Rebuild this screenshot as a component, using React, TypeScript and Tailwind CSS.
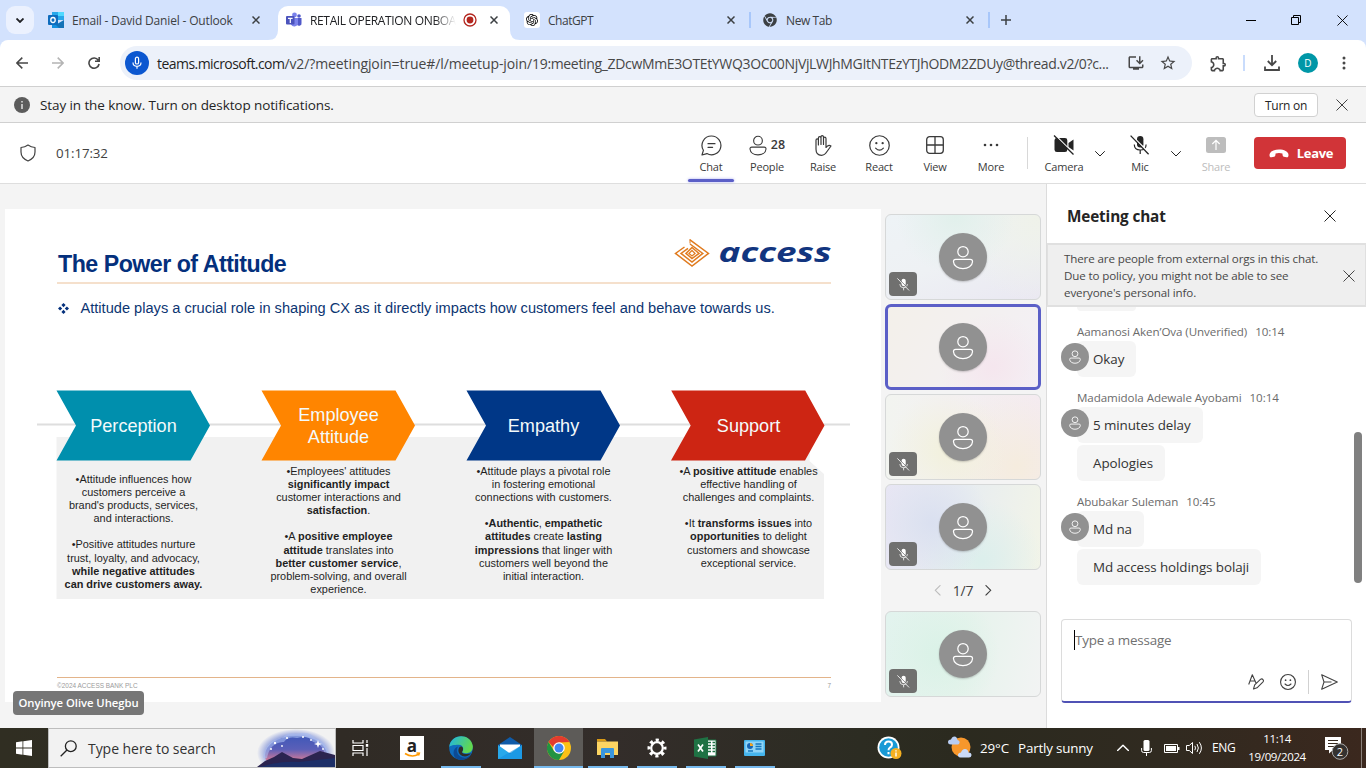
import React from "react";
import { SiOpenai } from "react-icons/si";
import { FaChrome } from "react-icons/fa";
import { MdInstallDesktop, MdStarBorder, MdOutlineExtension } from "react-icons/md";

type P = { className?: string };

const Dismiss = ({ className = "size-3" }: P) => (
  <svg viewBox="0 0 12 12" className={className} fill="none" stroke="currentColor" strokeWidth="1">
    <path d="M.5.5l11 11M11.5.5L.5 11.5" />
  </svg>
);

const TabClose = () => (
  <svg viewBox="0 0 8 8" className="size-2 shrink-0" fill="none" stroke="#3c4043" strokeWidth="1.5">
    <path d="M.5.5l7 7M7.5.5l-7 7" />
  </svg>
);

const Chevron = ({ className = "" }: P) => (
  <svg viewBox="0 0 10 6" className={className} fill="none" stroke="currentColor" strokeWidth="1">
    <path d="M.5.5L5 5 9.5.5" strokeLinecap="round" />
  </svg>
);

const Person = ({ className = "" }: P) => (
  <svg viewBox="0 0 22 26" className={className} fill="none" stroke="currentColor">
    <circle cx="11" cy="7" r="5.4" />
    <path d="M3.4 15h15.2q2.4 0 2.3 2.4C20.6 22 16.200 24.600 11 24.600S1.400 22 1.100 17.400Q1 15 3.400 15z" />
  </svg>
);

const MicOff = ({ className = "" }: P) => (
  <svg viewBox="0 0 20 20" className={className}>
    <rect x="7" y="1" width="6.400" height="11.500" rx="3.200" fill="currentColor" />
    <path d="M4.300 9.500q0 5.500 5.900 5.500t5.900-5.500M10.200 15v4" fill="none" stroke="currentColor" strokeWidth="1.200" />
    <path d="M1.600.400l18 18" stroke="var(--cut)" strokeWidth="1.400" />
    <path d="M.600.600l18 18.600" stroke="currentColor" strokeWidth="1.300" />
  </svg>
);

const Smile = ({ className = "" }: P) => (
  <svg viewBox="0 0 20 20" className={className} fill="none" stroke="currentColor" strokeWidth="1.150">
    <circle cx="10" cy="10" r="9.300" />
    <path d="M6.300 12.500Q10 16.400 13.700 12.500" strokeLinecap="round" />
    <circle cx="7" cy="7.800" r="1.100" fill="currentColor" stroke="none" />
    <circle cx="13" cy="7.800" r="1.100" fill="currentColor" stroke="none" />
  </svg>
);

function OutlookLogo() {
  return (
    <svg viewBox="0 0 16 16" className="size-4 shrink-0">
      <path d="M4 0h12v8H4z" fill="#28a8ea" />
      <path d="M10 0h6v4h-6z" fill="#50d9ff" />
      <path d="M4 4h6v4H4z" fill="#0364b8" />
      <path d="M16 8v8H4V9l6 2.500z" fill="#1490df" />
      <path d="M16 8l-8 5 3 3h5z" fill="#123b6d" opacity=".35" />
      <rect y="3" width="10" height="10" rx="1" fill="#0f6cbd" />
      <ellipse cx="5" cy="8" rx="2.200" ry="2.500" fill="none" stroke="#fff" strokeWidth="1.300" />
    </svg>
  );
}

function TeamsLogo() {
  return (
    <svg viewBox="0 0 16 16" className="size-4 shrink-0">
      <circle cx="13" cy="4" r="1.800" fill="#5059c9" />
      <circle cx="8.500" cy="3" r="2.400" fill="#7b83eb" />
      <path d="M11 6h4.500v5a2.300 2.300 0 0 1-4.500 1z" fill="#5059c9" />
      <path d="M5 6h7v5.500a3.800 3.800 0 0 1-7 1z" fill="#7b83eb" />
      <rect x="0" y="4" width="8.500" height="8.500" rx="1" fill="#4b53bc" />
      <path d="M2 6.300h4.600M4.300 6.300v4.600" stroke="#fff" strokeWidth="1.200" />
    </svg>
  );
}

function TabStrip() {
  return (
    <div className="flex h-10 bg-[#d3e2fd] text-[12px] text-[#3c4043]">
      <div className="ml-1.5 mt-1.5 flex size-7 items-center justify-center rounded-[9px] bg-[#ebf1fe]">
        <svg viewBox="0 0 8 5" className="w-2 text-[#202124]" fill="none" stroke="currentColor" strokeWidth="1.800">
          <path d="M.500.500L4 4 7.500.500" />
        </svg>
      </div>
      <div className="flex w-[244px] items-center pl-3.5">
        <OutlookLogo />
        <span className="ml-2 w-[180px] whitespace-nowrap pt-px tracking-[-0.170px]">Email - David Daniel - Outlook</span>
        <TabClose />
      </div>
      <div className="relative mt-1.5 flex w-[232px] items-center rounded-t-[10px] bg-white pb-1.5 pl-2 text-[#202124]">
        <svg className="absolute -left-2.5 bottom-0 size-2.5" viewBox="0 0 10 10"><path d="M10 0v10H0Q10 10 10 0z" fill="#fff" /></svg>
        <svg className="absolute -right-2.5 bottom-0 size-2.5" viewBox="0 0 10 10"><path d="M0 0v10h10Q0 10 0 0z" fill="#fff" /></svg>
        <TeamsLogo />
        <span className="ml-2 w-[146px] whitespace-nowrap pt-px tracking-[-0.350px] [mask-image:linear-gradient(to_right,#000_85%,transparent)]">
          RETAIL OPERATION ONBOA
        </span>
        <svg viewBox="0 0 14 14" className="ml-[7px] mr-[13px] size-3.5">
          <circle cx="7" cy="7" r="6" fill="none" stroke="#b3261e" strokeWidth="1.300" />
          <circle cx="7" cy="7" r="3.400" fill="#b3261e" />
        </svg>
        <TabClose />
      </div>
      <div className="flex w-[241px] items-center pl-3.5">
        <span className="flex size-4 items-center justify-center rounded-[3px] bg-white"><SiOpenai className="size-3 text-black" /></span>
        <span className="ml-2 w-[180px] pt-px tracking-[-0.450px]">ChatGPT</span>
        <TabClose />
        <span className="ml-3.5 h-4 w-0.5 bg-[#a8c7fa]" />
      </div>
      <div className="flex w-[239px] items-center pl-3">
        <FaChrome className="size-3.5 text-[#3c4043]" />
        <span className="ml-[9px] w-[180px] pt-px tracking-[-0.400px]">New Tab</span>
        <TabClose />
        <span className="ml-3.5 h-4 w-0.5 bg-[#a8c7fa]" />
      </div>
      <svg viewBox="0 0 10 10" className="ml-[11px] size-2.5 self-center" stroke="#3c4043" strokeWidth="1.500"><path d="M5 0v10M0 5h10" /></svg>
      <div className="ml-auto flex w-[138px] items-center justify-around text-black">
        <svg viewBox="0 0 10 10" className="w-2.5" stroke="currentColor"><path d="M0 5.500h10" /></svg>
        <svg viewBox="0 0 10 10" className="w-2.5" fill="none" stroke="currentColor"><path d="M.500 2.500h7v7h-7zM2.500 2.500v-2h7v7h-2" /></svg>
        <Dismiss className="size-[11px]" />
      </div>
    </div>
  );
}

function Toolbar() {
  return (
    <div className="bg-[#d3e2fd]">
      <div className="flex h-[46px] items-center rounded-t-lg bg-white text-[#474747]">
        <svg viewBox="0 0 12 12" className="ml-4 size-3" fill="none" stroke="currentColor" strokeWidth="1.500"><path d="M12 6H1M6.300.600L.900 6l5.400 5.400" /></svg>
        <svg viewBox="0 0 12 12" className="ml-6 size-3 text-[#b4b4b4]" fill="none" stroke="currentColor" strokeWidth="1.500"><path d="M0 6h11M5.700.600L11.100 6l-5.400 5.400" /></svg>
        <svg viewBox="0 0 12 12" className="ml-6 size-3" fill="none" stroke="currentColor" strokeWidth="1.600"><path d="M10.300 3.200A5.100 5.100 0 1 0 11.100 7M11.200 0v4.300H7" /></svg>
        <div className="ml-5 flex h-[34px] w-[1072px] items-center rounded-full bg-[#ecf1fa] pl-[5px]">
          <span className="flex size-6 items-center justify-center rounded-full bg-[#0b57d0]">
            <svg viewBox="0 0 10 14" className="h-3.5 w-2.5" fill="none" stroke="#fff" strokeWidth="1.200"><rect x="3.400" y="1.200" width="3.200" height="6.800" rx="1.600" /><path d="M1 6.500q0 3.800 4 3.800t4-3.800M5 10.300v2.400" /></svg>
          </span>
          <span className="ml-2 w-[966px] whitespace-nowrap text-[14px]">
            <span className="tracking-[-0.550px] text-[#1f1f1f]">teams.microsoft.com</span>
            <span className="tracking-[-0.100px]">/v2/?meetingjoin=true#/l/meetup-join/</span>
            <span className="tracking-[-0.340px]">19:meeting_ZDcwMmE3OTEtYWQ3OC00NjVjLWJhMGItNTEzYTJhODM2ZDUy@thread.v2/0?c...</span>
          </span>
          <MdInstallDesktop className="ml-1 size-[18px] shrink-0" />
          <MdStarBorder className="ml-3.5 size-[18px] shrink-0" />
        </div>
        <MdOutlineExtension className="ml-[17px] size-[19px]" />
        <span className="ml-[15px] h-4 w-0.5 bg-[#c9dcfc]" />
        <svg viewBox="0 0 16 16" className="ml-[19px] size-4" fill="none" stroke="currentColor" strokeWidth="1.800"><path d="M8 0v10M3.800 6L8 10.200 12.200 6M1 11.500V15h14v-3.500" /></svg>
        <span className="ml-[18px] flex size-5 items-center justify-center rounded-full bg-[#0097a7] text-[10px] text-white">D</span>
        <svg viewBox="0 0 4 14" className="ml-6 h-3.5 w-1" fill="currentColor"><circle cx="2" cy="2" r="1.500" /><circle cx="2" cy="7" r="1.500" /><circle cx="2" cy="12" r="1.500" /></svg>
      </div>
    </div>
  );
}

function Notice() {
  return (
    <div className="flex h-[37px] items-center border-y border-[#d0d0d0] bg-[#f4f4f4] pl-3.5 pt-px text-[#242424]">
      <svg viewBox="0 0 16 16" className="size-4"><circle cx="8" cy="8" r="8" fill="#5c5c5c" /><path d="M8 7v5M8 4v1.500" stroke="#f4f4f4" strokeWidth="1.300" /></svg>
      <span className="ml-2.5 text-[13.500px] tracking-[-0.100px]">Stay in the know. Turn on desktop notifications.</span>
      <span className="ml-auto flex h-6 w-16 items-center justify-center rounded border border-[#d1d1d1] bg-white pt-px text-[12px] tracking-[-0.250px]">Turn on</span>
      <Dismiss className="ml-[18px] mr-[18px] size-3 text-[#424242]" />
    </div>
  );
}

function Tool({ label, children, active, muted }: { label: string; children: React.ReactNode; active?: boolean; muted?: boolean }) {
  return (
    <div className={`flex h-full w-14 flex-col items-center pt-2.5 ${muted ? "text-[#bdbdbd]" : "text-[#3a3a3a]"}`}>
      <div className="flex h-6 items-center gap-1">{children}</div>
      <span className="mt-0.5 text-[11px] leading-4 tracking-[-0.200px]">{label}</span>
      {active && <span className="mt-1 h-[2.500px] w-[46px] rounded-full bg-[#5b5fc7] shadow-[0_0_3px_#a9abf0]" />}
    </div>
  );
}

function MeetingBar() {
  return (
    <div className="flex h-[61px] items-center border-b border-[#dedede] bg-white">
      <svg viewBox="0 0 16 18" className="ml-5 h-[18px] w-4 text-[#424242]" fill="none" stroke="currentColor" strokeWidth="1.200"><path d="M8 1q3 2.300 7 2.500V8q0 6-7 9Q1 14 1 8V3.500Q5 3.300 8 1z" strokeLinejoin="round" /></svg>
      <span className="ml-5 pt-px text-[13.300px] tracking-[-0.100px] text-[#424242]">01:17:32</span>
      <div className="ml-auto flex h-full">
        <Tool label="Chat" active>
          <svg viewBox="0 0 21 21" className="size-[21px]" fill="none" stroke="currentColor" strokeWidth="1.200"><path d="M10.500 1a9.400 9.400 0 1 1-4.600 17.600L1 20l1.400-4.700A9.400 9.400 0 0 1 10.500 1zM7 8.700h7M7 12.300h4.600" strokeLinecap="round" strokeLinejoin="round" /></svg>
        </Tool>
        <Tool label="People">
          <Person className="h-[21px] w-[18px] [stroke-width:1.400]" />
          <span className="text-[12.500px] font-semibold">28</span>
        </Tool>
        <Tool label="Raise">
          <svg viewBox="0 0 18 21" className="h-[21px] w-[18px]" fill="none" stroke="currentColor" strokeWidth="1.200" strokeLinecap="round" strokeLinejoin="round"><path d="M2 10V5.200q0-1.300 1.200-1.300t1.200 1.300V10 3q0-1.300 1.300-1.300T7 3v6.500V2Q7 .700 8.200.700T9.500 2v7.500V3.500q0-1.300 1.200-1.300T12 3.500V12.500l1.600-1.600q1.600-1.200 3.400.100L13 16.500q-2.300 3.800-5.500 3.800-5.500 0-5.500-6z" /></svg>
        </Tool>
        <Tool label="React"><Smile className="size-[21px]" /></Tool>
        <Tool label="View">
          <svg viewBox="0 0 18 18" className="size-[18px]" fill="none" stroke="currentColor" strokeWidth="1.300"><rect x=".700" y=".700" width="16.600" height="16.600" rx="3" /><path d="M9 .700v16.600M.700 9h16.600" /></svg>
        </Tool>
        <Tool label="More">
          <svg viewBox="0 0 16 4" className="h-1 w-4" fill="currentColor"><circle cx="2" cy="2" r="1.300" /><circle cx="8" cy="2" r="1.300" /><circle cx="14" cy="2" r="1.300" /></svg>
        </Tool>
      </div>
      <span className="ml-2 h-8 w-px bg-[#d8d8d8]" />
      <div className="ml-2 flex h-full items-center text-[#242424]">
        <Tool label="Camera">
          <svg viewBox="0 0 22 20" className="h-5 w-[22px]"><path d="M4 3h8q2.300 0 2.300 2.300v9.400Q14.300 17 12 17H4q-2.500 0-2.500-2.300V5.300Q1.500 3 4 3zM15.500 8l5-3.500v11l-5-3.500z" fill="#242424" /><path d="M2 0l19 19" stroke="#fff" strokeWidth="1.500" /><path d="M1 .500l19.500 19" stroke="#242424" strokeWidth="1.300" /></svg>
        </Tool>
        <div className="flex w-4 justify-center pt-0.5"><Chevron className="w-2.5" /></div>
      </div>
      <div className="ml-1 flex h-full items-center text-[#242424]">
        <Tool label="Mic"><MicOff className="size-5 text-[#242424] [--cut:#fff]" /></Tool>
        <div className="flex w-4 justify-center pt-0.5"><Chevron className="w-2.5" /></div>
      </div>
      <div className="ml-1 h-full">
        <Tool label="Share" muted>
          <svg viewBox="0 0 20 16" className="h-4 w-5"><rect width="20" height="16" rx="2.500" fill="#bdbdbd" /><path d="M10 13V3.500M6.300 7L10 3.300 13.700 7" fill="none" stroke="#fff" strokeWidth="1.200" /></svg>
        </Tool>
      </div>
      <div className="ml-2.5 mr-5 flex h-8 w-[92px] items-center justify-center gap-2 rounded bg-[#d13438] pl-0.5 text-white">
        <svg viewBox="0 0 20 9" className="w-5" fill="#fff"><path d="M10 .500c5 0 9.500 2 9.500 5.500 0 2-.800 2.500-2 2.200l-2.600-.500c-1-.200-1.200-.800-1.300-1.700l-.200-1.400C11.500 3.900 8.500 3.900 6.600 4.600L6.400 6c-.100.900-.300 1.500-1.300 1.700l-2.600.500c-1.200.300-2-.200-2-2.200C.500 2.500 5 .500 10 .500z" /></svg>
        <span className="pt-px text-[13px] font-bold tracking-[-0.300px]">Leave</span>
      </div>
    </div>
  );
}

const columns: { label: string[]; lines: React.ReactNode[]; top: string }[] = [
  {
    label: ["Perception"],
    top: "pt-[11.500px]",
    lines: ["•Attitude influences how", "customers perceive a", "brand's products, services,", "and interactions.", "", "•Positive attitudes nurture", "trust, loyalty, and advocacy,", <b>while negative attitudes</b>, <b>can drive customers away.</b>],
  },
  {
    label: ["Employee", "Attitude"],
    top: "pt-[3.500px]",
    lines: ["•Employees' attitudes", <b>significantly impact</b>, "customer interactions and", <><b>satisfaction</b>.</>, "", <>•A <b>positive employee</b></>, <><b>attitude</b> translates into</>, <><b>better customer service</b>,</>, "problem-solving, and overall", "experience."],
  },
  {
    label: ["Empathy"],
    top: "pt-[3.500px]",
    lines: ["•Attitude plays a pivotal role", "in fostering emotional", "connections with customers.", "", <>•<b>Authentic</b>, <b>empathetic</b></>, <><b>attitudes</b> create <b>lasting</b></>, <><b>impressions</b> that linger with</>, "customers well beyond the", "initial interaction."],
  },
  {
    label: ["Support"],
    top: "pt-[3.500px]",
    lines: [<>•A <b>positive attitude</b> enables</>, "effective handling of", "challenges and complaints.", "", <>•It <b>transforms issues</b> into</>, <><b>opportunities</b> to delight</>, "customers and showcase", "exceptional service."],
  },
];

function AccessLogo() {
  return (
    <div className="flex items-center">
      <svg viewBox="0 0 36 30" className="h-[30px] w-9" fill="none" stroke="#e07b1f" strokeWidth="1.500">
        <path d="M16 1.800L34.500 15.400 18 28 1.500 15.400 10.500 9" />
        <path d="M16 6L28.800 15.400 18 24 7 15.400 14 10.300" />
        <path d="M16 1v4.500" strokeWidth="1" />
        <path d="M18 9.500l7 5.900-7 5.200-6-5.200z" />
        <path d="M18 12.500l3 2.900-3 2.600-3-2.600z" strokeWidth="1.300" />
      </svg>
      <svg viewBox="0 0 114 30" className="ml-[7px] h-[30px] w-[114px] overflow-visible">
        <text x="1.500" y="24" textLength="113" lengthAdjust="spacingAndGlyphs" className="fill-[#12357f] font-['Open_Sans'] text-[27px] font-bold italic">access</text>
      </svg>
    </div>
  );
}

function Slide() {
  return (
    <div className="relative ml-[5px] mt-[25px] h-[493px] w-[876px] bg-white font-['Liberation_Sans',Arial,sans-serif]">
      <div className="ml-[52px] flex h-[75px] w-[774px] items-end justify-between border-b-2 border-[#f5e0cc]">
        <h1 className="mb-1 ml-px whitespace-nowrap text-[23.200px] font-bold leading-7 tracking-[-0.500px] text-[#04307c]">The Power of Attitude</h1>
        <div className="mb-[14px]"><AccessLogo /></div>
      </div>
      <div className="ml-[53px] mt-3 flex items-center text-[14.620px] leading-6 text-[#0c3572]">
        <svg viewBox="0 0 12 12" className="size-[11px]" fill="#04307c"><path d="M6 0l2.300 2.300L6 4.600 3.700 2.300zM6 7.400l2.300 2.300L6 12 3.700 9.700zM2.300 3.700L4.600 6 2.300 8.300 0 6zM9.700 3.700L12 6 9.700 8.300 7.400 6z" /></svg>
        <span className="ml-[11.500px] whitespace-nowrap">Attitude plays a crucial role in shaping CX as it directly impacts how customers feel and behave towards us.</span>
      </div>
      <div className="relative mt-[70px] h-[210px]">
        <svg className="absolute inset-0" width="876" height="210" viewBox="0 0 876 210">
          <path d="M32 34.500h813" stroke="#dedede" strokeWidth="2" />
          <path d="M51.500 47H806l-1.500 24 14.500 13v125H51.500z" fill="#f1f1f1" />
          <path d="M51.500.500h134L205 35.500l-19.500 35h-134L71 35.500z" fill="#008fad" />
          <path d="M256.500.500h134L410 35.500l-19.500 35h-134L276 35.500z" fill="#ff8500" />
          <path d="M461.500.500h134L615 35.500l-19.500 35h-134L481 35.500z" fill="#003787" />
          <path d="M666.200.500h134L819.500 35.500l-19.500 35h-134L685.700 35.500z" fill="#cd2513" />
        </svg>
        <div className="relative ml-[51.500px] flex gap-[51px]">
          {columns.map((c) => (
            <div key={c.label[0]} className="w-[154px]">
              <div className="flex h-[71px] flex-col items-center justify-center pt-px text-[18.100px] leading-[22px] text-[#f4fafb]">
                {c.label.map((l) => <span key={l}>{l}</span>)}
              </div>
              <div className={`flex flex-col items-center whitespace-nowrap text-[10.900px] leading-[13.200px] text-[#1f1f1f] ${c.top}`}>
                {c.lines.map((l, i) => <div key={i} className="h-[13.200px]">{l}</div>)}
              </div>
            </div>
          ))}
        </div>
      </div>
      <div className="ml-[52px] mt-[77px] flex w-[774px] justify-between border-t border-[#e3b48a] pt-1 text-[6.450px] leading-2 text-[#9a9a9a]">
        <span>©2024 ACCESS BANK PLC</span>
        <span>7</span>
      </div>
      <div className="absolute left-2 top-[482px] flex h-6 w-[131px] items-center justify-center whitespace-nowrap rounded bg-[#767676] pt-px font-['Open_Sans',sans-serif] text-[11.300px] font-semibold tracking-[-0.050px] text-white">
        Onyinye Olive Uhegbu
      </div>
    </div>
  );
}

function Tile({ bg, speaking }: { bg: string; speaking?: boolean }) {
  return (
    <div className={`relative flex h-[86px] w-[156px] items-center justify-center rounded-md ${speaking ? "border-[3px] border-[#5b5fc7]" : "border border-[#d6d8d8]"} ${bg}`}>
      <div className="flex size-12 items-center justify-center rounded-full bg-[#919191] shadow-[0_1px_2px_#0003]">
        <Person className="h-[25px] w-[22px] text-white [stroke-width:1.300]" />
      </div>
      {!speaking && (
        <div className="absolute bottom-[3px] left-[3px] flex h-6 w-7 items-center justify-center rounded bg-[#70706f]">
          <MicOff className="size-[13px] text-white [--cut:#70706f]" />
        </div>
      )}
    </div>
  );
}

function Participants() {
  return (
    <div className="ml-1 mt-[30px] flex flex-col gap-1">
      <Tile bg="bg-[radial-gradient(circle_at_45%_0%,#e1f0eb,transparent_50%),radial-gradient(circle_at_100%_0%,#eff2e9,transparent_50%),linear-gradient(160deg,#eef3f6,#eef1f4_50%,#eae8f2)]" />
      <Tile speaking bg="bg-[radial-gradient(circle_at_70%_75%,#f5e6ee,transparent_45%),linear-gradient(120deg,#f3f0ea,#f3f0f1_60%,#f4f0f6)]" />
      <Tile bg="bg-[radial-gradient(circle_at_40%_65%,#f2f1dc,transparent_55%),radial-gradient(circle_at_85%_85%,#f5ecde,transparent_55%),linear-gradient(90deg,#f2f4f0,#f4ebf3)]" />
      <Tile bg="bg-[radial-gradient(circle_at_30%_45%,#dae0f0,transparent_50%),radial-gradient(circle_at_62%_90%,#dcefec,transparent_50%),linear-gradient(100deg,#e8e6f4,#e8edf0_50%,#f2f4e8)]" />
      <div className="-my-1 flex h-[41px] items-center justify-center gap-2.5 text-[14px] text-[#424242]">
        <Chevron className="w-[11px] rotate-90 text-[#bdbdbd]" />
        <span className="tracking-[-0.200px]">1/7</span>
        <Chevron className="w-[11px] -rotate-90" />
      </div>
      <Tile bg="bg-[radial-gradient(circle_at_35%_50%,#daf2e7,transparent_55%),linear-gradient(100deg,#e2f3ee,#e6f3ec_50%,#f2f3f3)]" />
    </div>
  );
}

function Group({ name, time, messages }: { name: string; time: string; messages: string[] }) {
  return (
    <div className="ml-[30px] mt-[13px] flex flex-col items-start">
      <div className="flex h-4 items-center gap-2 whitespace-nowrap text-[11.600px] tracking-[-0.080px] text-[#6b6b6b]"><span>{name}</span><span>{time}</span></div>
      <div className="relative flex flex-col items-start gap-0.5 pt-px">
        {messages.map((m) => (
          <div key={m} className="flex h-9 items-center whitespace-nowrap rounded-md bg-[#f5f5f5] pl-4 pr-3 text-[13.400px] tracking-[-0.080px] text-[#333]">{m}</div>
        ))}
        <div className="absolute -left-4 top-[3px] flex size-7 items-center justify-center rounded-full bg-[#919191]">
          <Person className="h-3.5 w-3 text-white [stroke-width:1.600]" />
        </div>
      </div>
    </div>
  );
}

function Chat() {
  return (
    <div className="relative ml-[5px] flex w-80 flex-col border-l border-[#dcdcdc] bg-white">
      <div className="flex h-[59px] items-center justify-between pb-0 pl-5 pr-[30px] pt-1 text-[#242424]">
        <span className="pt-px text-[15.300px] font-bold tracking-[-0.130px]">Meeting chat</span>
        <Dismiss />
      </div>
      <div className="flex h-16 items-center justify-between border-2 border-x border-[#e0e0e0] bg-[#efefef] pl-4 pr-[10px] pt-px text-[#484848]">
        <p className="whitespace-nowrap text-[11.600px] leading-[17px] tracking-[-0.130px]">There are people from external orgs in this chat.<br />Due to policy, you might not be able to see<br />everyone's personal info.</p>
        <Dismiss />
      </div>
      <div className="ml-[30px] h-1 w-[59px] rounded-b-md bg-[#f5f5f5]" />
      <Group name="Aamanosi Aken’Ova (Unverified)" time="10:14" messages={["Okay"]} />
      <Group name="Madamidola Adewale Ayobami" time="10:14" messages={["5 minutes delay", "Apologies"]} />
      <Group name="Abubakar Suleman" time="10:45" messages={["Md na", "Md access holdings bolaji"]} />
      <div className="ml-3.5 mt-[34px] flex h-[84px] w-[291px] flex-col justify-between rounded border border-b-2 border-[#dcdcdc] border-b-[#5052b5] px-3 pt-2.5">
        <span className="h-5 border-l border-black text-[13.400px] leading-5 tracking-[-0.200px] text-[#707070]">Type a message</span>
        <div className="flex h-[39px] items-center justify-end pr-px text-[#424242]">
          <svg viewBox="0 0 16 16" className="mr-4 size-4" fill="none" stroke="currentColor" strokeWidth="1.100" strokeLinejoin="round"><path d="M.700 10.500L4.300.800 8 9M2 7h4.600M5.500 15l1.200-4.200 5.700-5.400q1.600-1.100 2.600.200 1 1.200-.200 2.500L9 13.800z" /></svg>
          <Smile className="size-4 [stroke-width:1.400]" />
          <span className="mx-3 h-6 w-px bg-[#d1d1d1]" />
          <svg viewBox="0 0 17 16" className="h-4 w-[17px]" fill="none" stroke="currentColor" strokeWidth="1.100" strokeLinejoin="round"><path d="M.700.800L16.300 8 .700 15.200 3 8zM3 8h7.500" /></svg>
        </div>
      </div>
      <div className="absolute right-1 top-[248px] h-[151px] w-2 rounded-full bg-[#808080]" />
    </div>
  );
}

function TaskIcon({ children, open, on }: { children: React.ReactNode; open?: boolean; on?: boolean }) {
  return (
    <div className={`flex h-10 w-[49px] shrink-0 flex-col items-center ${on ? "bg-[#5d5b58]" : ""}`}>
      <div className="flex h-[38px] items-center pt-[2px]">{children}</div>
      {open && <span className={`h-0.5 bg-[#76b9ed] ${on ? "w-full" : "w-10"}`} />}
    </div>
  );
}

function Taskbar() {
  return (
    <div className="flex h-10 items-center bg-[linear-gradient(90deg,#302e22,#302b25_25%,#332d2a_45%,#2c2c22_63%,#2b2a1f_70%,#302a20_85%,#3b281e)] text-white">
      <div className="flex w-12 justify-center">
        <svg viewBox="0 0 16 16" className="size-4" fill="#fff"><path d="M0 2.200l6.500-.900v6.300H0zM7.300 1.200L16 0v7.600H7.300zM0 8.400h6.500v6.300L0 13.800zM7.300 8.400H16V16l-8.700-1.200z" /></svg>
      </div>
      <div className="flex h-10 w-72 items-center border border-[#bdbdbd] bg-[#f2f2f2] text-[#333]">
        <svg viewBox="0 0 17 17" className="ml-[11px] size-[17px]" fill="none" stroke="#222" strokeWidth="1.300"><circle cx="10.800" cy="6.200" r="5.400" /><path d="M7 10L.700 16.300" /></svg>
        <span className="ml-[11px] text-[14px] tracking-[-0.050px]">Type here to search</span>
        <svg viewBox="0 0 78 38" className="ml-auto h-[38px] w-[78px]">
          <defs>
            <linearGradient id="sky" x1="0" y1="0" x2="0" y2="1"><stop offset="0" stopColor="#4058b8" /><stop offset=".350" stopColor="#5a5fb8" /><stop offset=".620" stopColor="#c9789a" /><stop offset=".780" stopColor="#ff9463" /><stop offset="1" stopColor="#7a3b63" /></linearGradient>
            <radialGradient id="halo"><stop offset=".650" stopColor="#7387d6" /><stop offset="1" stopColor="#f2f2f2" /></radialGradient>
          </defs>
          <ellipse cx="39" cy="24" rx="39" ry="24" fill="url(#halo)" />
          <ellipse cx="39" cy="26" rx="31" ry="19" fill="url(#sky)" />
          <path d="M8 29Q11 12 26 11q5-6 14-4 12-3 17 4 11 3 13 15" fill="none" stroke="#a9bdf0" strokeWidth="4" opacity=".6" />
          <path d="M0 38l8-6 9-4 8-5 11 6 9 1 18-8 15 4v12z" fill="#2b2450" />
          <path d="M2 38q20-6 40-5l36-4v9z" fill="#1d2f68" />
          <g fill="#fff"><circle cx="14" cy="20" r="1" /><circle cx="18" cy="14" r="1.200" /><circle cx="30" cy="9" r="1.100" /><circle cx="46" cy="8" r="1" /><circle cx="66" cy="20" r=".900" /><circle cx="25" cy="17" r=".900" /><circle cx="54" cy="11" r=".900" /><path d="M61 11l1 3 3 1-3 1-1 3-1-3-3-1 3-1z" /></g>
        </svg>
      </div>
      <div className="flex w-12 justify-center">
        <svg viewBox="0 0 17 16" className="h-4 w-[17px]" fill="none" stroke="#fff" strokeWidth="1.200"><path d="M1 0v3h10V0M1 16v-3h10v3M1 5.500h10v5H1zM15 0v3M15 8v8" /><path d="M13.800 4h2.400v2.800h-2.400z" fill="#fff" stroke="none" /></svg>
      </div>
      <div className="flex w-[395px] shrink-0 pl-[3px]">
        <TaskIcon>
          <svg viewBox="0 0 24 24" className="size-6 overflow-visible"><rect width="24" height="24" fill="#fff" /><text x="12" y="16" textAnchor="middle" className="fill-[#222] font-['Open_Sans'] text-[17px] font-bold">a</text><path d="M5 17.500q7 4.500 13.500.800M16.500 17l2.800.300-.800 2.300" fill="none" stroke="#f90" strokeWidth="1.600" /></svg>
        </TaskIcon>
        <TaskIcon open>
          <svg viewBox="0 0 24 24" className="size-6"><defs><linearGradient id="edg" x1="0" y1="0" x2="1" y2=".400"><stop offset="0" stopColor="#1fb5e6" /><stop offset="1" stopColor="#62d94e" /></linearGradient></defs><circle cx="12" cy="12" r="11.800" fill="#0f6cbd" /><path d="M.300 11C1.500-3 22-3 23.800 10c.400 5-3 7.300-7 7.300-2.500 0-4-1-3.700-1.600 2-2 1.500-7-3.500-7C5 8.700 1 9.500.300 11z" fill="url(#edg)" /><path d="M9 10.500C6.500 14 8 20 14 21.500c3 .500 6-.500 8.300-3C19 24 12 25 8 23 3 20.500 3.500 12 9 10.500z" fill="#0c4a94" /><path d="M13.100 15.700c-1 2 5 3.300 9 1.600-2.500 3.600-8 4.200-11 1.200-3-3-1.500-8.500 1.500-8 2 1 1.800 4 .500 5.200z" fill="#302c28" /></svg>
        </TaskIcon>
        <TaskIcon>
          <svg viewBox="0 0 24 22" className="h-[22px] w-6"><path d="M0 8L12 0l12 8v3H0z" fill="#0f5ba8" /><path d="M2 7.500h20V16H2z" fill="#fff" /><path d="M0 8l12 8.500L24 8v14H0z" fill="#28a8ea" /><path d="M0 22L24 8v14z" fill="#1490df" opacity=".600" /></svg>
        </TaskIcon>
        <TaskIcon open on>
          <svg viewBox="0 0 24 24" className="size-6"><circle cx="12" cy="12" r="12" fill="#fbc116" /><path d="M1.600 6A12 12 0 0 1 22.400 6L12 6.500 8 13z" fill="#e33b2e" /><path d="M1.600 6A12 12 0 0 0 12 24l5.200-9L12 17.500 7 15z" fill="#229342" /><circle cx="12" cy="12" r="5.800" fill="#fff" /><circle cx="12" cy="12" r="4.500" fill="#4285f4" /></svg>
        </TaskIcon>
        <TaskIcon open>
          <svg viewBox="0 0 22 19" className="h-[19px] w-[22px]"><path d="M0 0h8l2 2.500H0z" fill="#d99a16" /><path d="M0 2.500h21V16H0z" fill="#fcd462" /><path d="M4 10q0-1 1-1h11q1 0 1 1v9h-4v-5H8v5H4z" fill="#3a96dd" /></svg>
        </TaskIcon>
        <TaskIcon open>
          <svg viewBox="0 0 20 20" className="size-5" fill="none" stroke="#fff"><circle cx="10" cy="10" r="5.800" strokeWidth="2.200" /><circle cx="10" cy="10" r="8" strokeWidth="3" strokeDasharray="3.140 3.140" strokeDashoffset="1.570" /></svg>
        </TaskIcon>
        <TaskIcon open>
          <svg viewBox="0 0 23 22" className="h-[22px] w-[23px]"><path d="M12 3h10v16H12z" fill="#fff" stroke="#1f7244" /><path d="M14 5.500h3M18.500 5.500h2.500M14 8.500h3M18.500 8.500h2.500M14 11.500h3M18.500 11.500h2.500M14 14.500h3M18.500 14.500h2.500" stroke="#1f7244" strokeWidth="1.500" /><path d="M0 2.500L14 0v22L0 19.500z" fill="#1f7244" /><path d="M4 7.500l5 7M9 7.500l-5 7" stroke="#fff" strokeWidth="1.700" /></svg>
        </TaskIcon>
        <TaskIcon open>
          <svg viewBox="0 0 21 16" className="h-4 w-[21px]"><rect width="21" height="16" rx="1" fill="#45b5ed" /><rect x="1.500" y="1.500" width="18" height="11" fill="#8fd4f7" /><circle cx="6" cy="6" r="3" fill="#1565b5" /><path d="M6 6V3a3 3 0 0 1 3 3z" fill="#f5a623" /><path d="M11.500 4h6M11.500 6.500h6M4 11h5M11.500 9h6" stroke="#1576bd" strokeWidth="1.300" /></svg>
        </TaskIcon>
      </div>
      <svg viewBox="0 0 26 24" className="ml-[98px] h-6 w-[26px]"><circle cx="11.500" cy="11.500" r="11" fill="#fff" /><circle cx="11.500" cy="11.500" r="9.300" fill="#189ad6" /><path d="M8 9q0-3.500 3.500-3.500T15 8.700q0 1.700-2 2.800-1.500.900-1.500 2.800M11.500 16v2.200" fill="none" stroke="#fff" strokeWidth="2" /><circle cx="19" cy="17.500" r="5.500" fill="#f5b021" /><path d="M19 16.500v4M19 14.300v1.300" stroke="#fff" strokeWidth="1.400" /></svg>
      <svg viewBox="0 0 24 24" className="ml-[45px] size-6"><circle cx="13" cy="11" r="9.500" fill="#f7972c" /><path d="M3 8.500Q0 8.500 0 6t3-2.500Q4 .500 6.500.500T9.500 4Q12 4.500 11.500 7q-.500 1.500-2 1.500z" fill="#b9cdf2" /><path d="M12.500 21.500Q9.500 21 10 18.500q.500-2 3-2 1-3.500 4-3.500t3.500 3.500q3.200.300 3 2.700-.200 2.300-2.500 2.300z" fill="#c9d9f7" /></svg>
      <span className="ml-2 text-[13.400px] tracking-[-0.100px]">29°C</span>
      <span className="ml-[9px] w-[89px] whitespace-nowrap text-[13.400px] tracking-[-0.200px]">Partly sunny</span>
      <Chevron className="ml-[10px] w-3 rotate-180 [stroke-width:1.200]" />
      <svg viewBox="0 0 11 16" className="ml-3 h-4 w-[11px]"><rect x="2.500" width="6" height="11" rx="1.500" fill="#fff" /><path d="M.600 8v2.500q0 2 2 2h5.800q2 0 2-2V8M5.500 12.500V16" fill="none" stroke="#fff" /></svg>
      <svg viewBox="0 0 16 9" className="ml-3 h-[9px] w-4"><path d="M.500.500h13v8H.500z" fill="none" stroke="#fff" /><path d="M2 2h10v5H2zM14 3h1.500v3H14z" fill="#fff" /></svg>
      <svg viewBox="0 0 17 14" className="ml-1.5 h-3.5 w-[17px]" fill="none" stroke="#fff"><path d="M.500 4.500h2.800l3.200-3v11l-3.200-3H.500zM8.800 4.800q1.400 2.200 0 4.400M11 3q2.700 4 0 8M13.300 1.200q4.200 5.800 0 11.600" /></svg>
      <span className="ml-[9px] w-6 text-[12px] tracking-[-0.400px]">ENG</span>
      <div className="ml-2.5 flex w-[62px] flex-col items-center whitespace-nowrap text-[11.500px] leading-[18px] tracking-[-0.350px]"><span>11:14</span><span>19/09/2024</span></div>
      <svg viewBox="0 0 24 24" className="ml-[17px] size-6"><path d="M0 1h16v13H8l-4 3.500V14H0z" fill="#fff" /><path d="M3 4.500h10M3 7.500h10M3 10.500h6" stroke="#35291f" strokeWidth="1.200" /><circle cx="15" cy="15.500" r="7.800" fill="#353230" stroke="#aaa" /><text x="15" y="19.500" textAnchor="middle" className="fill-white font-['Open_Sans'] text-[11px]">2</text></svg>
      <span className="ml-auto mr-1 h-10 w-px bg-[#8a807a]" />
    </div>
  );
}

export default function App() {
  return (
    <div className="h-[768px] w-[1366px] overflow-hidden bg-[#f4f4f4] font-['Open_Sans','Noto_Sans',sans-serif]">
      <TabStrip />
      <Toolbar />
      <Notice />
      <MeetingBar />
      <div className="flex h-[544px]">
        <Slide />
        <Participants />
        <Chat />
      </div>
      <Taskbar />
    </div>
  );
}
